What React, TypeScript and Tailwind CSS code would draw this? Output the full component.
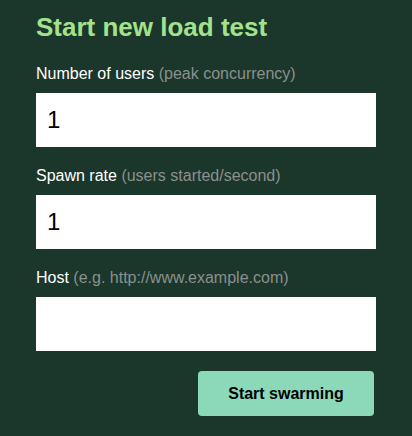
const Field = (props: { label: string; hint: string; value?: string }) => {
  return (
    <div className="flex flex-col">
      <label className="text-[16px] leading-[20px] text-white h-[20px]">
        {props.label} <span className="text-[#8b918d]">{props.hint}</span>
      </label>
      <input
        type="text"
        defaultValue={props.value}
        className="mt-[9px] w-[340px] h-[54px] bg-white px-[11px] text-[24px] text-black outline-none"
      />
    </div>
  )
}

export default function App() {
  return (
    <div
      className="w-[412px] h-[436px] bg-[#1b362b] px-[36px] pt-[11px] overflow-hidden"
      style={{ fontFamily: '"Liberation Sans", Arial, sans-serif' }}
    >
      <h2 className="text-[26px] leading-[32px] font-bold text-[#a3e28d]">
        Start new load test
      </h2>
      <div className="mt-[21px] flex flex-col gap-[19px]">
        <Field label="Number of users" hint="(peak concurrency)" value="1" />
        <Field label="Spawn rate" hint="(users started/second)" value="1" />
        <Field label="Host" hint="(e.g. http://www.example.com)" />
      </div>
      <div className="flex justify-end mt-[20px] w-[338px]">
        <button
          type="button"
          className="w-[176px] h-[45px] rounded-[4px] bg-[#8cd9b9] text-[16px] font-bold text-black"
        >
          Start swarming
        </button>
      </div>
    </div>
  )
}
